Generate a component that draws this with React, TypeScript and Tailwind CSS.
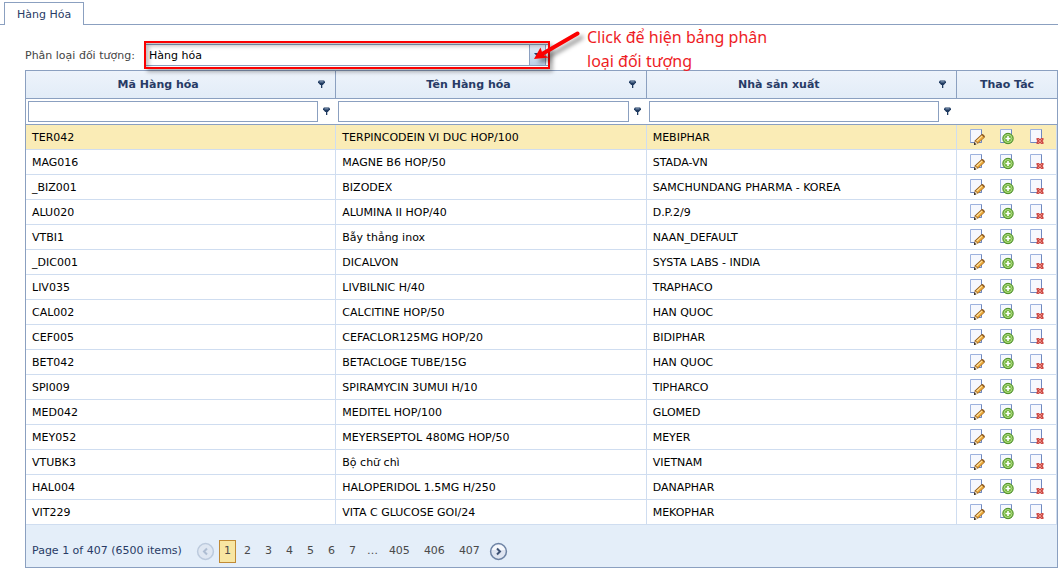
import React from 'react';

type Item = { code: string; name: string; maker: string };

const items: Item[] = [
  { code: 'TER042', name: 'TERPINCODEIN VI DUC HOP/100', maker: 'MEBIPHAR' },
  { code: 'MAG016', name: 'MAGNE B6 HOP/50', maker: 'STADA-VN' },
  { code: '_BIZ001', name: 'BIZODEX', maker: 'SAMCHUNDANG PHARMA - KOREA' },
  { code: 'ALU020', name: 'ALUMINA II HOP/40', maker: 'D.P.2/9' },
  { code: 'VTBI1', name: 'Bẫy thẳng inox', maker: 'NAAN_DEFAULT' },
  { code: '_DIC001', name: 'DICALVON', maker: 'SYSTA LABS - INDIA' },
  { code: 'LIV035', name: 'LIVBILNIC H/40', maker: 'TRAPHACO' },
  { code: 'CAL002', name: 'CALCITINE HOP/50', maker: 'HAN QUOC' },
  { code: 'CEF005', name: 'CEFACLOR125MG HOP/20', maker: 'BIDIPHAR' },
  { code: 'BET042', name: 'BETACLOGE TUBE/15G', maker: 'HAN QUOC' },
  { code: 'SPI009', name: 'SPIRAMYCIN 3UMUI H/10', maker: 'TIPHARCO' },
  { code: 'MED042', name: 'MEDITEL HOP/100', maker: 'GLOMED' },
  { code: 'MEY052', name: 'MEYERSEPTOL 480MG HOP/50', maker: 'MEYER' },
  { code: 'VTUBK3', name: 'Bộ chữ chì', maker: 'VIETNAM' },
  { code: 'HAL004', name: 'HALOPERIDOL 1.5MG H/250', maker: 'DANAPHAR' },
  { code: 'VIT229', name: 'VITA C GLUCOSE GOI/24', maker: 'MEKOPHAR' },
];

const columns = ['Mã Hàng hóa', 'Tên Hàng hóa', 'Nhà sản xuất'];

function FunnelIcon() {
  return (
    <svg width="7" height="9" viewBox="0 0 7 9" className="block">
      <path d="M1 .5h5l1 1v1L4.800 5H2.200L0 2.500v-1z" fill="#1f3a60" />
      <path d="M1.500 1.500h4v.8h-4z" fill="#a9bdd6" />
      <path d="M3 4h1.300v4H3z" fill="#1f3a60" />
    </svg>
  );
}

function Sheet() {
  return (
    <>
      <path d="M1.500 .5h11v13h-11z" fill="#f6f8fe" stroke="#9db2de" />
      <path d="M1.500 13.500h11V.5" fill="none" stroke="#6f88c0" />
    </>
  );
}

function EditIcon() {
  return (
    <svg width="16" height="16" viewBox="0 0 16 16" className="block">
      <Sheet />
      <path d="M5 16l.8-4.500 6.700-6.300 1.300-.2 2 2 .1 1.300-6.800 6.300z" fill="#8f5a1e" />
      <path d="M6.800 11.800l6-5.600 2.200 2.200-6 5.600z" fill="#e9a637" />
      <path d="M7.200 11.700l5.700-5.300.8.8L8 12.500z" fill="#ffe7a6" />
      <path d="M6.200 12.200l2.500 2.200-2.700 1z" fill="#f5e2c0" />
      <path d="M5 16l.5-2.400 1.800 1.700z" fill="#1c1c1c" />
    </svg>
  );
}

function AddIcon() {
  return (
    <svg width="16" height="16" viewBox="0 0 16 16" className="block">
      <Sheet />
      <circle cx="9" cy="9.500" r="5.200" fill="#6fb43a" stroke="#4d8f25" />
      <circle cx="9" cy="9.500" r="4" fill="none" stroke="#b4dc8a" />
      <path d="M9 7v5M6.500 9.500h5" stroke="#fff" strokeWidth="1.600" />
    </svg>
  );
}

function DeleteIcon() {
  return (
    <svg width="16" height="16" viewBox="0 0 16 16" className="block">
      <Sheet />
      <path
        d="M7.500 9h2.200l1.300 1 1.300-1h2.200v2.100l-1 .9 1 .9V15h-2.200L11 14l-1.300 1H7.500v-2.100l1-.9-1-.9z"
        fill="#cc4540"
      />
      <path d="M8.800 9.900l4.400 4.200M13.200 9.900l-4.400 4.200" stroke="#f0a198" strokeWidth=".8" />
    </svg>
  );
}

function ArrowCircle({ disabled = false }: { disabled?: boolean }) {
  return disabled ? (
    <svg width="19" height="19" viewBox="0 0 19 19" className="block">
      <circle cx="9.500" cy="9.500" r="7.900" fill="#dfe7f2" stroke="#bccadd" strokeWidth="1.500" />
      <path d="M11 6.500l-3 3 3 3" fill="none" stroke="#aebdd2" strokeWidth="2" />
    </svg>
  ) : (
    <svg width="19" height="19" viewBox="0 0 19 19" className="block">
      <circle cx="9.500" cy="9.500" r="7.900" fill="#dfe5f1" stroke="#6d82a3" strokeWidth="1.500" />
      <path d="M3 8a6.700 6.700 0 0 1 13 0z" fill="#f6f8fc" />
      <path d="M8 6.500l3 3-3 3" fill="none" stroke="#3f5375" strokeWidth="2" />
    </svg>
  );
}

function Callout() {
  return (
    <>
      <div className="pointer-events-none absolute -inset-x-0.5 -inset-y-1 border-2 border-[#fb0000] shadow-[3px_3px_4px_rgba(0,0,0,0.3),inset_3px_3px_4px_rgba(0,0,0,0.25)]" />
      <svg
        width="60"
        height="46"
        viewBox="0 0 60 46"
        className="pointer-events-none absolute -top-4 left-[385px] overflow-visible drop-shadow-[4px_4px_2px_rgba(0,0,0,0.4)]"
      >
        <path d="M46.500 4.500L12 24.500" stroke="#fb0000" strokeWidth="4" strokeLinecap="round" />
        <path d="M3 30l6.500-11.500 1.500 4.500 2.500 3.500 4.500 2z" fill="#fb0000" />
      </svg>
      <p className="absolute -top-5 left-[441px] w-52 font-['Noto_Sans',sans-serif] text-[16px] leading-6 text-[#ee1c25]">
        Click để hiện bảng phân loại đối tượng
      </p>
    </>
  );
}

const pageButton = 'block px-[7px] text-[#4a4a4a]';

export default function App() {
  return (
    <div className="bg-white pt-0.5 font-['DejaVu_Sans',Verdana,sans-serif] text-[11px] leading-4 text-black">
      <nav className="flex">
        <div className="w-1 border-b border-[#8ba0c0]" />
        <a
          href="#hang-hoa"
          className="block h-[23px] border border-b-0 border-[#8ba0c0] px-3 pt-1 text-[#283b66]"
        >
          Hàng Hóa
        </a>
        <div className="flex-1 border-b border-[#8ba0c0]" />
      </nav>

      <main className="pl-[25px] pt-[19px]">
        <div className="flex h-[26px] items-start">
          <label htmlFor="category" className="w-[120px] pt-1 whitespace-nowrap text-[#444]">
            Phân loại đối tượng:
          </label>
          <div className="relative flex h-[22px] w-[404px] border border-[#8ba0c0]">
            <select id="category" className="min-w-0 flex-1 appearance-none bg-white px-[3px] pt-0.5 outline-none">
              <option>Hàng hóa</option>
            </select>
            <span className="pointer-events-none mr-0.5 flex w-[17px] items-center justify-center border-x border-[#8ba0c0] bg-linear-to-b from-[#e3ecf8] to-[#bcd0e8]">
              <svg width="7" height="4" viewBox="0 0 7 4">
                <path d="M0 0h7L3.500 4z" fill="#283b66" />
              </svg>
            </span>
            <Callout />
          </div>
        </div>

        <div className="border border-[#8ba0c0]">
          <table className="w-full table-fixed border-separate border-spacing-0">
            <colgroup>
              <col />
              <col />
              <col />
              <col className="w-[100px]" />
            </colgroup>
            <thead>
              <tr className="h-7 bg-linear-to-b from-[#edf3fb] to-[#e2ecf7] text-[#283b66]">
                {columns.map((title) => (
                  <th key={title} className="border-r border-b border-[#8ba0c0] p-0">
                    <div className="flex items-center gap-7 pr-2.5">
                      <span className="flex-1">{title}</span>
                      <button type="button" aria-label={`Lọc ${title}`}>
                        <FunnelIcon />
                      </button>
                    </div>
                  </th>
                ))}
                <th className="border-b border-[#8ba0c0] p-0">Thao Tác</th>
              </tr>
              <tr className="h-[26px]">
                {columns.map((title) => (
                  <td key={title} className="border-b border-[#8ba0c0] p-0">
                    <div className="flex items-center gap-[5px] pr-1.5 pl-0.5">
                      <input
                        type="text"
                        aria-label={title}
                        className="h-[21px] min-w-0 flex-1 border border-[#8ba0c0] bg-white px-1 outline-none"
                      />
                      <button type="button" aria-label={`Điều kiện ${title}`}>
                        <FunnelIcon />
                      </button>
                    </div>
                  </td>
                ))}
                <td className="border-b border-[#8ba0c0] p-0" />
              </tr>
            </thead>
            <tbody>
              {items.map((item, index) => (
                <tr key={item.code} className={index === 0 ? 'h-[25px] bg-[#faecb6]' : 'h-[25px]'}>
                  {[item.code, item.name, item.maker].map((value, cell) => (
                    <td key={cell} className="border-r border-b border-[#cfddf0] px-1.5 pt-0.5 pb-0 whitespace-nowrap">
                      {value}
                    </td>
                  ))}
                  <td className="border-r border-b border-[#cfddf0] p-0">
                    <div className="flex justify-center gap-3.5">
                      <button type="button" aria-label={`Sửa ${item.code}`}>
                        <EditIcon />
                      </button>
                      <button type="button" aria-label={`Thêm ${item.code}`}>
                        <AddIcon />
                      </button>
                      <button type="button" aria-label={`Xóa ${item.code}`}>
                        <DeleteIcon />
                      </button>
                    </div>
                  </td>
                </tr>
              ))}
            </tbody>
          </table>

          <footer className="flex h-[42px] items-center bg-[#e4eef9] pt-2.5 pl-1.5 text-[#283b66]">
            <span className="mr-3.5">Page 1 of 407 (6500 items)</span>
            <button type="button" disabled aria-label="Trang trước">
              <ArrowCircle disabled />
            </button>
            <button
              type="button"
              aria-current="page"
              className="mr-px ml-1 h-[23px] w-[17px] border border-[#c08a35] bg-[#f8e6a2] text-[#4a4a4a]"
            >
              1
            </button>
            {['2', '3', '4', '5', '6', '7'].map((page) => (
              <button key={page} type="button" className={pageButton}>
                {page}
              </button>
            ))}
            <span className="px-1 text-[#4a4a4a]">…</span>
            {['405', '406', '407'].map((page) => (
              <button key={page} type="button" className={pageButton}>
                {page}
              </button>
            ))}
            <button type="button" aria-label="Trang sau" className="ml-0.5">
              <ArrowCircle />
            </button>
          </footer>
        </div>
      </main>
    </div>
  );
}
